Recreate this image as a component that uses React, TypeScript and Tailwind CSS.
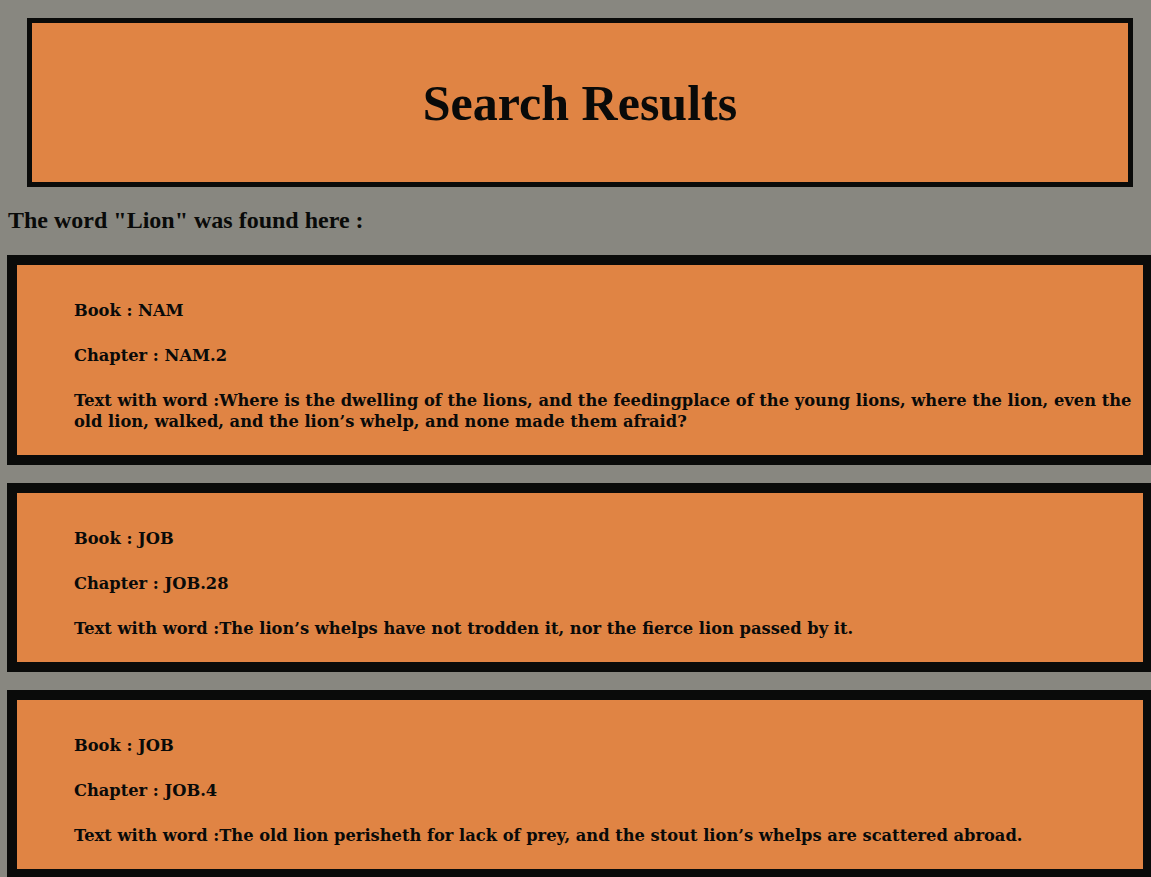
const RESULTS = [
  {
    book: 'NAM',
    chapter: 'NAM.2',
    text: 'Where is the dwelling of the lions, and the feedingplace of the young lions, where the lion, even the old lion, walked, and the lion’s whelp, and none made them afraid?',
  },
  {
    book: 'JOB',
    chapter: 'JOB.28',
    text: 'The lion’s whelps have not trodden it, nor the fierce lion passed by it.',
  },
  {
    book: 'JOB',
    chapter: 'JOB.4',
    text: 'The old lion perisheth for lack of prey, and the stout lion’s whelps are scattered abroad.',
  },
];

export default function App() {
  return (
    <div className="min-h-screen w-full overflow-hidden bg-[#888780] pt-[18px] pb-4 text-[#090a09]">
      {/* Header */}
      <div className="ml-[27px] flex h-[169px] w-[1106px] items-center justify-center border-[5px] border-[#0a0b0a] bg-[#e08444]">
        <h1 className="font-['Liberation_Serif',serif] text-[50px] font-bold leading-none">
          Search Results
        </h1>
      </div>

      <h2 className="ml-[8px] mt-[20px] font-['Liberation_Serif',serif] text-[24px] font-bold leading-[27px]">
        The word "Lion" was found here :
      </h2>

      {/* Results */}
      <div className="mt-[21px] flex flex-col gap-[18px]">
        {RESULTS.map((r, idx) => (
          <div
            key={idx}
            className="ml-[7px] w-[1146px] border-[10px] border-[#0a0b0a] bg-[#e08444] pb-[23px] pl-[57px] pt-[35px] font-['DejaVu_Serif',serif] text-[16.3px] font-bold leading-[21px]"
          >
            <p>Book : {r.book}</p>
            <p className="mt-[24px]">Chapter : {r.chapter}</p>
            <p className="mt-[24px]">Text with word :{r.text}</p>
          </div>
        ))}
      </div>
    </div>
  );
}
